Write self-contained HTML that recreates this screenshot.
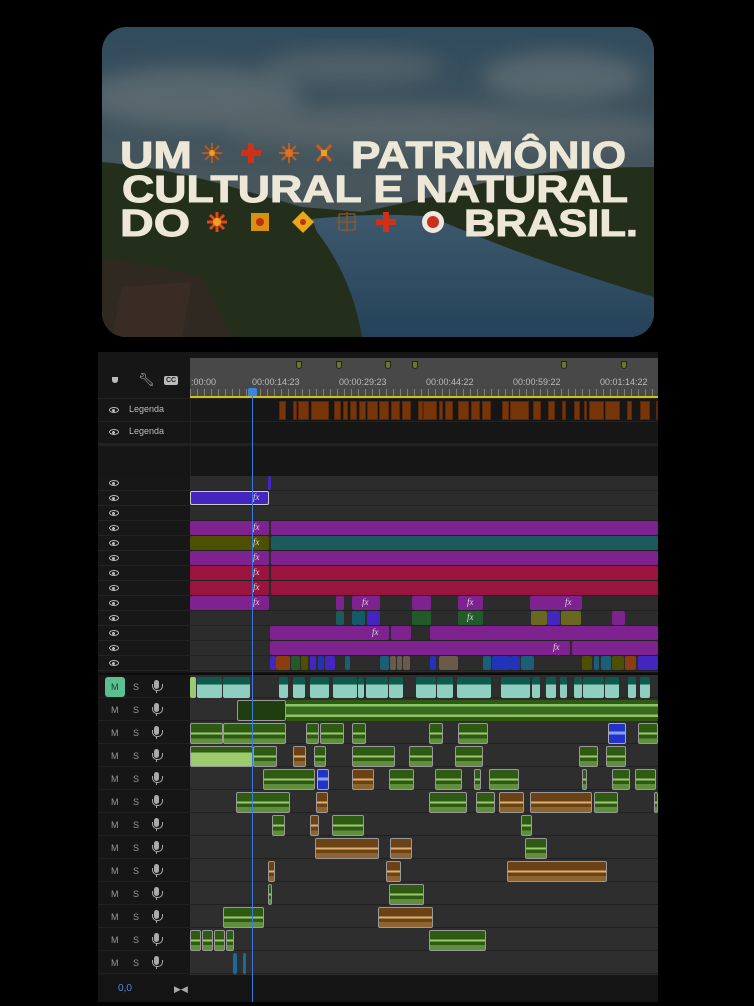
<!DOCTYPE html>
<html><head><meta charset="utf-8"><style>
*{margin:0;padding:0;box-sizing:border-box}
body{width:754px;height:1006px;background:#000;position:relative;overflow:hidden;font-family:"Liberation Sans",sans-serif}
.a{position:absolute}
.l{position:absolute;top:401px;height:19px;background:#77360a;border:1px solid #5a2806}
.v{position:absolute;height:14px;border-radius:2px}
.p{background:#7e2290}.r{background:#9a1440}.t{background:#1d5a5c}.o{background:#4c5000}.vi{background:#4425c0}
.g{background:#235a2a}.tl{background:#1a5e78}.bl{background:#2233b8}.tn{background:#6a5a4a}.or{background:#8a3e10}.ol{background:#6a6820}.cy{background:#145a6a}
.fx{position:absolute;font:italic 9px "Liberation Serif",serif;color:#ddd;top:1px}
.w{position:absolute;height:21px;border-radius:2px}
.tw{background:linear-gradient(#0e5a4c 0 35%,#8fcfbf 35%)}
.gw{background:linear-gradient(#2e5a14 0 45%,#9ccb6e 45% 55%,#2e5a14 55% 75%,#5f8f3c 75%);border:1px solid #999}
.bw{background:linear-gradient(#6b4215 0 45%,#e0b070 45% 55%,#6b4215 55% 75%,#8e6430 75%);border:1px solid #999}
.uw{background:linear-gradient(#2233c8 0 40%,#8aa0ff 40% 55%,#2233c8 55%);border:1px solid #aaa}
.eye{position:absolute;left:109px;width:10px;height:6px;border:1.5px solid #bbb;border-radius:50%/50%}
.eye:after{content:"";position:absolute;left:2px;top:0.5px;width:3px;height:3px;background:#bbb;border-radius:50%}
.ms{position:absolute;font-size:9px;color:#999}
.mic{position:absolute;left:154px;width:5px;height:9px;background:#aaa;border-radius:3px}
.mic:before{content:"";position:absolute;left:-2px;top:4px;width:9px;height:6px;border:1px solid #aaa;border-top:none;border-radius:0 0 5px 5px}
.mic:after{content:"";position:absolute;left:2px;top:10px;width:1px;height:3px;background:#aaa}
.ru{position:absolute;top:377px;font-size:9px;color:#bbb}
.mk{position:absolute;top:361px;width:6px;height:8px;background:#6b7a1e;border:1px solid #222;border-radius:0 0 3px 3px}
</style></head><body>
<!-- image card -->
<svg class="a" style="left:102px;top:27px" width="552" height="310" viewBox="0 0 552 310">
<defs>
<clipPath id="cp"><rect width="552" height="310" rx="24"/></clipPath>
<linearGradient id="sky" x1="0" y1="0" x2="0" y2="1"><stop offset="0" stop-color="#3d5f75"/><stop offset="0.5" stop-color="#5a6c74"/><stop offset="1" stop-color="#4c5a5c"/></linearGradient>
<linearGradient id="riv" x1="0" y1="0" x2="0" y2="1"><stop offset="0" stop-color="#4d6f88"/><stop offset="1" stop-color="#2e5370"/></linearGradient>
<filter id="bl"><feGaussianBlur stdDeviation="10"/></filter>
</defs>
<g clip-path="url(#cp)">
<rect width="552" height="310" fill="url(#sky)"/>
<g filter="url(#bl)" opacity=".55">
<ellipse cx="90" cy="70" rx="110" ry="30" fill="#8e9a9c"/>
<ellipse cx="250" cy="40" rx="90" ry="18" fill="#7e8a8e"/>
<ellipse cx="460" cy="50" rx="80" ry="25" fill="#8e9a9c"/>
<ellipse cx="300" cy="100" rx="180" ry="22" fill="#828f92"/>
<ellipse cx="470" cy="105" rx="90" ry="18" fill="#7f8c90"/>
</g>
<path d="M0 135 Q60 140 130 160 L200 180 L260 185 L330 170 Q420 140 552 140 L552 310 L0 310Z" fill="#2c3a22"/>
<path d="M210 192 Q280 185 330 190 Q420 230 552 270 L552 310 L260 310 Q250 250 215 205Z" fill="url(#riv)"/>
<path d="M0 230 Q60 240 100 250 L130 310 L0 310Z" fill="#3d342a"/>
<path d="M20 260 L90 255 L80 310 L10 310Z" fill="#4a3a30" opacity=".8"/>
<rect width="552" height="310" fill="#000" opacity=".2"/>
</g>
<g font-family="Liberation Sans" font-weight="bold" fill="#ece7d6" font-size="38" stroke="#ece7d6" stroke-width="1">
<text x="18" y="141" textLength="72" lengthAdjust="spacingAndGlyphs">UM</text>
<text x="249" y="141" textLength="275" lengthAdjust="spacingAndGlyphs">PATRIMÔNIO</text>
<text x="20" y="175" textLength="506" lengthAdjust="spacingAndGlyphs">CULTURAL E NATURAL</text>
<text x="18" y="209" textLength="70" lengthAdjust="spacingAndGlyphs">DO</text>
<text x="362" y="209" textLength="174" lengthAdjust="spacingAndGlyphs">BRASIL.</text>
</g>
<g>
<g stroke="#b8541c" stroke-width="2"><path d="M110 116v20M100 126h20M103 119l14 14M117 119l-14 14"/></g><circle cx="110" cy="126" r="3" fill="#e8a020"/>
<path d="M146 116h6v7h7v6h-7v7h-6v-7h-7v-6h7z" fill="#d03018"/>
<g stroke="#c0601e" stroke-width="2"><path d="M187 116v20M177 126h20M180 119l14 14M194 119l-14 14"/></g><circle cx="187" cy="126" r="4" fill="#e07020"/>
<path d="M215 118l14 16M229 118l-14 16" stroke="#d05a18" stroke-width="3"/><rect x="219" y="123" width="6" height="6" fill="#e8a020"/>
<g stroke="#e04818" stroke-width="3"><path d="M115 185v20M105 195h20M108 188l14 14M122 188l-14 14"/></g><circle cx="115" cy="195" r="4" fill="#f0a020"/>
<rect x="149" y="186" width="18" height="18" fill="#d89010"/><circle cx="158" cy="195" r="4" fill="#c03010"/>
<path d="M201 184l11 11-11 11-11-11z" fill="#e8a818"/><circle cx="201" cy="195" r="3" fill="#c03010"/>
<g stroke="#9a5a20" stroke-width="1.5" opacity=".8"><path d="M237 187h16M237 203h16M237 187v16M253 187v16M245 185v20M235 195h20"/></g>
<path d="M281 185h6v7h7v6h-7v7h-6v-7h-7v-6h7z" fill="#d03018"/>
<circle cx="331" cy="195" r="11" fill="#f0e8dc"/><circle cx="331" cy="195" r="6" fill="#c83020"/>
</g>
</svg>

<!-- timeline panel -->
<div class="a" style="left:98px;top:352px;width:560px;height:650px;background:#161616"></div>
<div class="a" style="left:190px;top:358px;width:468px;height:39px;background:#484848"></div>
<div class="a" style="left:190px;top:389px;width:468px;height:8px;background:repeating-linear-gradient(90deg,#999 0 1px,transparent 1px 7px);opacity:.7"></div>
<div class="a" style="left:190px;top:396px;width:468px;height:2px;background:#d4c010"></div>
<div class="ru" style="left:191px">:00:00</div>
<div class="ru" style="left:252px">00:00:14:23</div>
<div class="ru" style="left:339px">00:00:29:23</div>
<div class="ru" style="left:426px">00:00:44:22</div>
<div class="ru" style="left:513px">00:00:59:22</div>
<div class="ru" style="left:600px">00:01:14:22</div>
<div class="mk" style="left:296px"></div><div class="mk" style="left:336px"></div><div class="mk" style="left:385px"></div><div class="mk" style="left:412px"></div><div class="mk" style="left:561px"></div><div class="mk" style="left:621px"></div>
<div class="a" style="left:112px;top:377px;width:6px;height:6px;background:#bbb;border-radius:0 0 3px 3px"></div>
<div class="a" style="left:138px;top:372px;font-size:13px;color:#bbb">&#x1F527;&#xFE0E;</div>
<div class="a" style="left:164px;top:376px;width:14px;height:9px;background:#bbb;border-radius:2px;font:bold 7px 'Liberation Sans';color:#222;text-align:center;line-height:9px">CC</div>

<!-- legenda -->
<div class="a" style="left:98px;top:398px;width:560px;height:1px;background:#222"></div>
<div class="a" style="left:98px;top:421px;width:560px;height:1px;background:#222"></div>
<div class="a" style="left:98px;top:443px;width:560px;height:3px;background:#222"></div>
<div class="a" style="left:190px;top:398px;width:1px;height:80px;background:#222"></div>
<div class="eye" style="top:407px"></div><div class="a" style="left:129px;top:404px;font-size:9px;color:#bbb">Legenda</div>
<div class="eye" style="top:429px"></div><div class="a" style="left:129px;top:426px;font-size:9px;color:#bbb">Legenda</div>
<div class="l" style="left:279px;width:7px"></div><div class="l" style="left:293px;width:4px"></div><div class="l" style="left:298px;width:11px"></div><div class="l" style="left:311px;width:18px"></div><div class="l" style="left:334px;width:7px"></div><div class="l" style="left:343px;width:5px"></div><div class="l" style="left:350px;width:7px"></div><div class="l" style="left:359px;width:7px"></div><div class="l" style="left:367px;width:11px"></div><div class="l" style="left:379px;width:10px"></div><div class="l" style="left:391px;width:9px"></div><div class="l" style="left:402px;width:9px"></div><div class="l" style="left:418px;width:5px"></div><div class="l" style="left:423px;width:14px"></div><div class="l" style="left:439px;width:4px"></div><div class="l" style="left:445px;width:8px"></div><div class="l" style="left:458px;width:11px"></div><div class="l" style="left:471px;width:9px"></div><div class="l" style="left:482px;width:9px"></div><div class="l" style="left:502px;width:7px"></div><div class="l" style="left:510px;width:19px"></div><div class="l" style="left:533px;width:8px"></div><div class="l" style="left:548px;width:7px"></div><div class="l" style="left:562px;width:4px"></div><div class="l" style="left:574px;width:6px"></div><div class="l" style="left:584px;width:3px"></div><div class="l" style="left:589px;width:15px"></div><div class="l" style="left:605px;width:15px"></div><div class="l" style="left:627px;width:5px"></div><div class="l" style="left:640px;width:10px"></div><div class="l" style="left:656px;width:2px"></div>

<!-- video tracks -->
<div class="a" style="left:190px;top:476px;width:468px;height:196px;background:repeating-linear-gradient(#2c2c2c 0 14px,#222 14px 15px)"></div>
<div class="a" style="left:98px;top:476px;width:92px;height:196px;background:repeating-linear-gradient(#171717 0 14px,#222 14px 15px)"></div>
<div class="eye" style="top:480px"></div><div class="eye" style="top:495px"></div><div class="eye" style="top:510px"></div><div class="eye" style="top:525px"></div><div class="eye" style="top:540px"></div><div class="eye" style="top:555px"></div><div class="eye" style="top:570px"></div><div class="eye" style="top:585px"></div><div class="eye" style="top:600px"></div><div class="eye" style="top:615px"></div><div class="eye" style="top:630px"></div><div class="eye" style="top:645px"></div><div class="eye" style="top:660px"></div>
<div class="v vi" style="left:268px;top:476px;width:3px"></div>
<div class="v vi" style="left:190px;top:491px;width:79px;border:1.5px solid #ccc"></div><span class="fx" style="left:253px;top:492px">fx</span>
<div class="v p" style="left:190px;top:521px;width:79px"></div><div class="v p" style="left:271px;top:521px;width:387px"></div><span class="fx" style="left:253px;top:522px">fx</span>
<div class="v o" style="left:190px;top:536px;width:79px"></div><div class="v t" style="left:271px;top:536px;width:387px"></div><span class="fx" style="left:253px;top:537px">fx</span>
<div class="v p" style="left:190px;top:551px;width:79px"></div><div class="v p" style="left:271px;top:551px;width:387px"></div><span class="fx" style="left:253px;top:552px">fx</span>
<div class="v r" style="left:190px;top:566px;width:79px"></div><div class="v r" style="left:271px;top:566px;width:387px"></div><span class="fx" style="left:253px;top:567px">fx</span>
<div class="v r" style="left:190px;top:581px;width:79px"></div><div class="v r" style="left:271px;top:581px;width:387px"></div><span class="fx" style="left:253px;top:582px">fx</span>
<div class="v p" style="left:190px;top:596px;width:79px"></div><span class="fx" style="left:253px;top:597px">fx</span>
<div class="v p" style="left:336px;top:596px;width:8px"></div><div class="v p" style="left:352px;top:596px;width:28px"></div><span class="fx" style="left:362px;top:597px">fx</span><div class="v p" style="left:412px;top:596px;width:19px"></div><div class="v p" style="left:458px;top:596px;width:25px"></div><span class="fx" style="left:467px;top:597px">fx</span><div class="v p" style="left:530px;top:596px;width:52px"></div><span class="fx" style="left:565px;top:597px">fx</span>
<div class="v t" style="left:336px;top:611px;width:8px"></div><div class="v cy" style="left:352px;top:611px;width:6px"></div><div class="v cy" style="left:358px;top:611px;width:7px"></div><div class="v vi" style="left:367px;top:611px;width:13px"></div><div class="v g" style="left:412px;top:611px;width:19px"></div><div class="v g" style="left:458px;top:611px;width:25px"></div><span class="fx" style="left:467px;top:612px">fx</span><div class="v ol" style="left:531px;top:611px;width:16px"></div><div class="v vi" style="left:547px;top:611px;width:13px"></div><div class="v ol" style="left:561px;top:611px;width:20px"></div><div class="v p" style="left:612px;top:611px;width:13px"></div>
<div class="v p" style="left:270px;top:626px;width:119px"></div><span class="fx" style="left:372px;top:627px">fx</span><div class="v p" style="left:391px;top:626px;width:20px"></div><div class="v p" style="left:430px;top:626px;width:228px"></div>
<div class="v p" style="left:270px;top:641px;width:300px"></div><span class="fx" style="left:553px;top:642px">fx</span><div class="v p" style="left:572px;top:641px;width:86px"></div>
<div class="v vi" style="left:270px;top:656px;width:6px"></div><div class="v or" style="left:276px;top:656px;width:14px"></div><div class="v g" style="left:291px;top:656px;width:9px"></div><div class="v o" style="left:301px;top:656px;width:7px"></div><div class="v vi" style="left:310px;top:656px;width:6px"></div><div class="v bl" style="left:318px;top:656px;width:6px"></div><div class="v vi" style="left:325px;top:656px;width:10px"></div><div class="v tl" style="left:345px;top:656px;width:5px"></div><div class="v tl" style="left:380px;top:656px;width:9px"></div><div class="v tn" style="left:390px;top:656px;width:6px"></div><div class="v tn" style="left:397px;top:656px;width:5px"></div><div class="v tn" style="left:403px;top:656px;width:7px"></div><div class="v bl" style="left:430px;top:656px;width:6px"></div><div class="v tn" style="left:439px;top:656px;width:19px"></div><div class="v tl" style="left:483px;top:656px;width:8px"></div><div class="v bl" style="left:492px;top:656px;width:18px"></div><div class="v bl" style="left:510px;top:656px;width:10px"></div><div class="v tl" style="left:521px;top:656px;width:13px"></div><div class="v o" style="left:582px;top:656px;width:10px"></div><div class="v tl" style="left:594px;top:656px;width:5px"></div><div class="v tl" style="left:601px;top:656px;width:10px"></div><div class="v o" style="left:612px;top:656px;width:12px"></div><div class="v or" style="left:625px;top:656px;width:11px"></div><div class="v vi" style="left:638px;top:656px;width:20px"></div>

<!-- audio tracks -->
<div class="a" style="left:98px;top:673px;width:560px;height:2px;background:#0c0c0c"></div>
<div class="a" style="left:190px;top:675px;width:468px;height:300px;background:repeating-linear-gradient(#2e2e2e 0 22px,#202020 22px 23px)"></div>
<div class="a" style="left:98px;top:675px;width:92px;height:300px;background:repeating-linear-gradient(#161616 0 22px,#202020 22px 23px)"></div>
<div class="a" style="left:105px;top:677px;width:20px;height:20px;background:#5cbf92;border-radius:3px"></div>
<div class="ms" style="left:111px;top:682px;color:#1a3a2a">M</div>
<div class="ms" style="left:111px;top:705px">M</div><div class="ms" style="left:111px;top:728px">M</div><div class="ms" style="left:111px;top:751px">M</div><div class="ms" style="left:111px;top:774px">M</div><div class="ms" style="left:111px;top:797px">M</div><div class="ms" style="left:111px;top:820px">M</div><div class="ms" style="left:111px;top:843px">M</div><div class="ms" style="left:111px;top:866px">M</div><div class="ms" style="left:111px;top:889px">M</div><div class="ms" style="left:111px;top:912px">M</div><div class="ms" style="left:111px;top:935px">M</div><div class="ms" style="left:111px;top:958px">M</div>
<div class="ms" style="left:133px;top:682px">S</div><div class="ms" style="left:133px;top:705px">S</div><div class="ms" style="left:133px;top:728px">S</div><div class="ms" style="left:133px;top:751px">S</div><div class="ms" style="left:133px;top:774px">S</div><div class="ms" style="left:133px;top:797px">S</div><div class="ms" style="left:133px;top:820px">S</div><div class="ms" style="left:133px;top:843px">S</div><div class="ms" style="left:133px;top:866px">S</div><div class="ms" style="left:133px;top:889px">S</div><div class="ms" style="left:133px;top:912px">S</div><div class="ms" style="left:133px;top:935px">S</div><div class="ms" style="left:133px;top:958px">S</div>
<div class="mic" style="top:680px"></div><div class="mic" style="top:703px"></div><div class="mic" style="top:726px"></div><div class="mic" style="top:749px"></div><div class="mic" style="top:772px"></div><div class="mic" style="top:795px"></div><div class="mic" style="top:818px"></div><div class="mic" style="top:841px"></div><div class="mic" style="top:864px"></div><div class="mic" style="top:887px"></div><div class="mic" style="top:910px"></div><div class="mic" style="top:933px"></div><div class="mic" style="top:956px"></div>

<div class="w tw" style="top:677px;left:190px;width:6px;background:#9cc978"></div>
<div class="w tw" style="top:677px;left:197px;width:25px"></div><div class="w tw" style="top:677px;left:223px;width:27px"></div><div class="w tw" style="top:677px;left:279px;width:9px"></div><div class="w tw" style="top:677px;left:293px;width:12px"></div><div class="w tw" style="top:677px;left:310px;width:19px"></div><div class="w tw" style="top:677px;left:333px;width:24px"></div><div class="w tw" style="top:677px;left:358px;width:6px"></div><div class="w tw" style="top:677px;left:366px;width:22px"></div><div class="w tw" style="top:677px;left:389px;width:14px"></div><div class="w tw" style="top:677px;left:416px;width:20px"></div><div class="w tw" style="top:677px;left:437px;width:16px"></div><div class="w tw" style="top:677px;left:457px;width:34px"></div><div class="w tw" style="top:677px;left:501px;width:29px"></div><div class="w tw" style="top:677px;left:532px;width:8px"></div><div class="w tw" style="top:677px;left:546px;width:10px"></div><div class="w tw" style="top:677px;left:560px;width:7px"></div><div class="w tw" style="top:677px;left:574px;width:8px"></div><div class="w tw" style="top:677px;left:583px;width:21px"></div><div class="w tw" style="top:677px;left:605px;width:14px"></div><div class="w tw" style="top:677px;left:628px;width:8px"></div><div class="w tw" style="top:677px;left:640px;width:10px"></div>

<div class="w gw" style="top:700px;left:237px;width:49px;background:#1e3e10"></div><div class="w" style="top:700px;left:286px;width:372px;background:linear-gradient(#2e5a14 0 20%,#8fc56a 20% 30%,#3a6a1e 30% 70%,#8fc56a 70% 80%,#2e5a14 80%)"></div>

<div class="w gw" style="top:723px;left:190px;width:33px"></div><div class="w gw" style="top:723px;left:223px;width:63px"></div><div class="w gw" style="top:723px;left:306px;width:13px"></div><div class="w gw" style="top:723px;left:320px;width:24px"></div><div class="w gw" style="top:723px;left:352px;width:14px"></div><div class="w gw" style="top:723px;left:429px;width:14px"></div><div class="w gw" style="top:723px;left:458px;width:30px"></div><div class="w uw" style="top:723px;left:608px;width:18px"></div><div class="w gw" style="top:723px;left:638px;width:20px"></div>

<div class="w gw" style="top:746px;left:190px;width:63px;background:linear-gradient(#2e5a14 0 30%,#9ccb6e 30%)"></div><div class="w gw" style="top:746px;left:253px;width:24px"></div><div class="w bw" style="top:746px;left:293px;width:13px"></div><div class="w gw" style="top:746px;left:314px;width:12px"></div><div class="w gw" style="top:746px;left:352px;width:43px"></div><div class="w gw" style="top:746px;left:409px;width:24px"></div><div class="w gw" style="top:746px;left:455px;width:28px"></div><div class="w gw" style="top:746px;left:579px;width:19px"></div><div class="w gw" style="top:746px;left:606px;width:20px"></div>

<div class="w gw" style="top:769px;left:263px;width:52px"></div><div class="w uw" style="top:769px;left:317px;width:12px"></div><div class="w bw" style="top:769px;left:352px;width:22px"></div><div class="w gw" style="top:769px;left:389px;width:25px"></div><div class="w gw" style="top:769px;left:435px;width:27px"></div><div class="w gw" style="top:769px;left:474px;width:7px"></div><div class="w gw" style="top:769px;left:489px;width:30px"></div><div class="w gw" style="top:769px;left:582px;width:5px"></div><div class="w gw" style="top:769px;left:612px;width:18px"></div><div class="w gw" style="top:769px;left:635px;width:21px"></div>

<div class="w gw" style="top:792px;left:236px;width:54px"></div><div class="w bw" style="top:792px;left:316px;width:12px"></div><div class="w gw" style="top:792px;left:429px;width:38px"></div><div class="w gw" style="top:792px;left:476px;width:19px"></div><div class="w bw" style="top:792px;left:499px;width:25px"></div><div class="w bw" style="top:792px;left:530px;width:62px"></div><div class="w gw" style="top:792px;left:594px;width:24px"></div><div class="w gw" style="top:792px;left:654px;width:4px"></div>

<div class="w gw" style="top:815px;left:272px;width:13px"></div><div class="w bw" style="top:815px;left:310px;width:9px"></div><div class="w gw" style="top:815px;left:332px;width:32px"></div><div class="w gw" style="top:815px;left:521px;width:11px"></div>

<div class="w bw" style="top:838px;left:315px;width:64px"></div><div class="w bw" style="top:838px;left:390px;width:22px"></div><div class="w gw" style="top:838px;left:525px;width:22px"></div>

<div class="w bw" style="top:861px;left:268px;width:7px"></div><div class="w bw" style="top:861px;left:386px;width:15px"></div><div class="w bw" style="top:861px;left:507px;width:100px"></div>

<div class="w gw" style="top:884px;left:268px;width:4px"></div><div class="w gw" style="top:884px;left:389px;width:35px"></div>

<div class="w gw" style="top:907px;left:223px;width:41px"></div><div class="w bw" style="top:907px;left:378px;width:55px"></div>

<div class="w gw" style="top:930px;left:190px;width:11px"></div><div class="w gw" style="top:930px;left:202px;width:11px"></div><div class="w gw" style="top:930px;left:214px;width:11px"></div><div class="w gw" style="top:930px;left:226px;width:8px"></div><div class="w gw" style="top:930px;left:429px;width:57px"></div>

<div class="w" style="top:953px;left:233px;width:4px;background:#1a6a9a"></div><div class="w" style="top:953px;left:243px;width:3px;background:#1a6a9a"></div>

<!-- bottom bar -->
<div class="a" style="left:98px;top:976px;width:560px;height:26px;background:#141414"></div>
<div class="a" style="left:118px;top:983px;font-size:10px;color:#4a8ad8">0,0</div>
<div class="a" style="left:174px;top:984px;font-size:9px;color:#aaa">&#x25B6;&#x25C0;</div>

<!-- playhead -->
<div class="a" style="left:252px;top:392px;width:1px;height:610px;background:#3a7ae0"></div>
<div class="a" style="left:248px;top:388px;width:9px;height:8px;background:#3a86e0;border-radius:2px 2px 0 0"></div>
</body></html>
